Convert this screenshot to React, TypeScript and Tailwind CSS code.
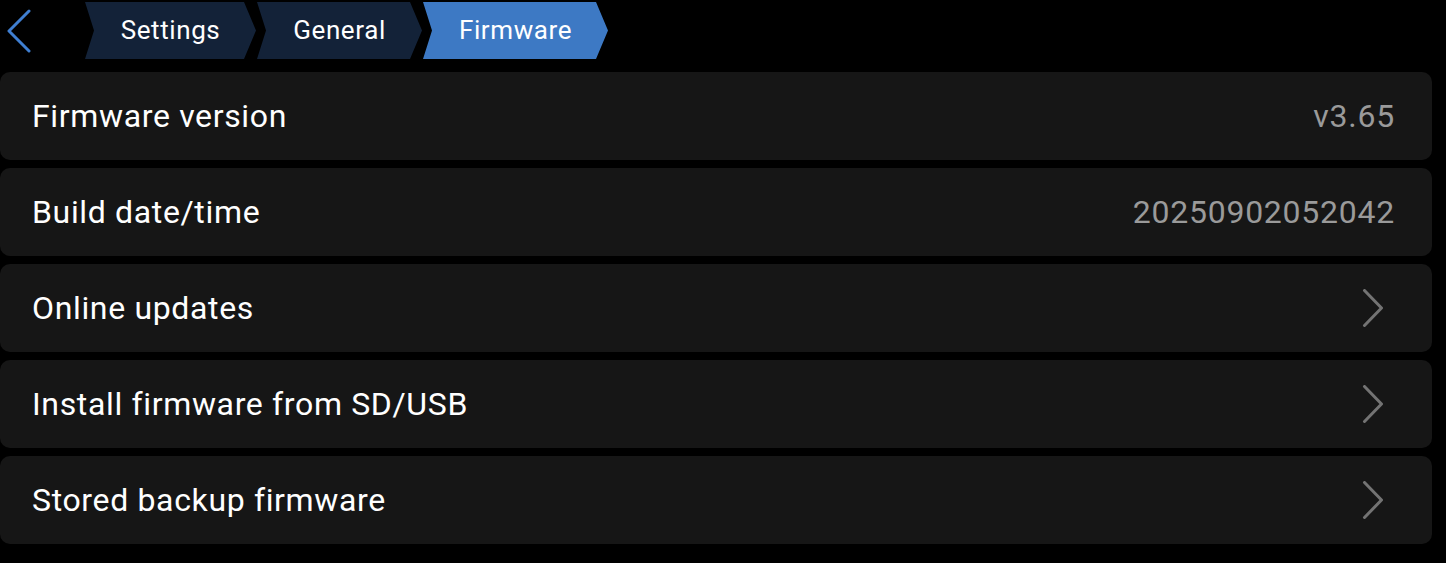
import React from 'react';

const crumbs = [
  { label: 'Settings', width: 'w-[171px]', active: false },
  { label: 'General', width: 'w-[165px]', active: false },
  { label: 'Firmware', width: 'w-[185px]', active: true },
];

const rows = [
  { label: 'Firmware version', value: 'v3.65' },
  { label: 'Build date/time', value: '20250902052042' },
  { label: 'Online updates', link: true },
  { label: 'Install firmware from SD/USB', link: true },
  { label: 'Stored backup firmware', link: true },
];

const Chevron = () => (
  <svg width="22" height="38" viewBox="0 0 22 38" fill="none">
    <path d="M2.5 1.5 L19.5 19 L2.5 36.5" stroke="#737373" strokeWidth="3" strokeLinecap="round" strokeLinejoin="round" />
  </svg>
);

const App = () => {
  return (
    <div className="w-[1446px] h-[563px] bg-black overflow-hidden font-['Roboto',sans-serif]">
      {/* breadcrumb bar */}
      <div className="flex items-center h-[60px] pt-px">
        <div className="w-[85px] h-full flex items-center pl-[6px]">
          <svg width="26" height="44" viewBox="0 0 26 44" fill="none">
            <path d="M23 2 L3 22 L23 42" stroke="#3f7fd2" strokeWidth="3" strokeLinecap="round" strokeLinejoin="round" />
          </svg>
        </div>
        {crumbs.map((c) => (
          <div
            key={c.label}
            className={`${c.width} h-[57px] mr-[1px] flex items-center justify-center text-white text-[26px] tracking-[0.6px] [clip-path:polygon(0_0,calc(100%_-_12px)_0,100%_50%,calc(100%_-_12px)_100%,0_100%,9px_50%)] ${
              c.active ? 'bg-[#3d79c4]' : 'bg-[#132238]'
            }`}
          >
            {c.label}
          </div>
        ))}
      </div>

      {/* settings list */}
      <div className="flex flex-col gap-2 mt-[12px] w-[1432px]">
        {rows.map((r) => (
          <div key={r.label} className="h-[88px] bg-[#161616] rounded-[10px] flex items-center justify-between pl-[32px]">
            <span className="text-white text-[32px] tracking-[0.65px]">{r.label}</span>
            {r.link ? (
              <span className="pr-[48px] flex items-center">
                <Chevron />
              </span>
            ) : (
              <span className="text-[#9a9a9a] text-[32px] tracking-[0.75px] pr-[37px]">{r.value}</span>
            )}
          </div>
        ))}
      </div>
    </div>
  );
};

export default App;
